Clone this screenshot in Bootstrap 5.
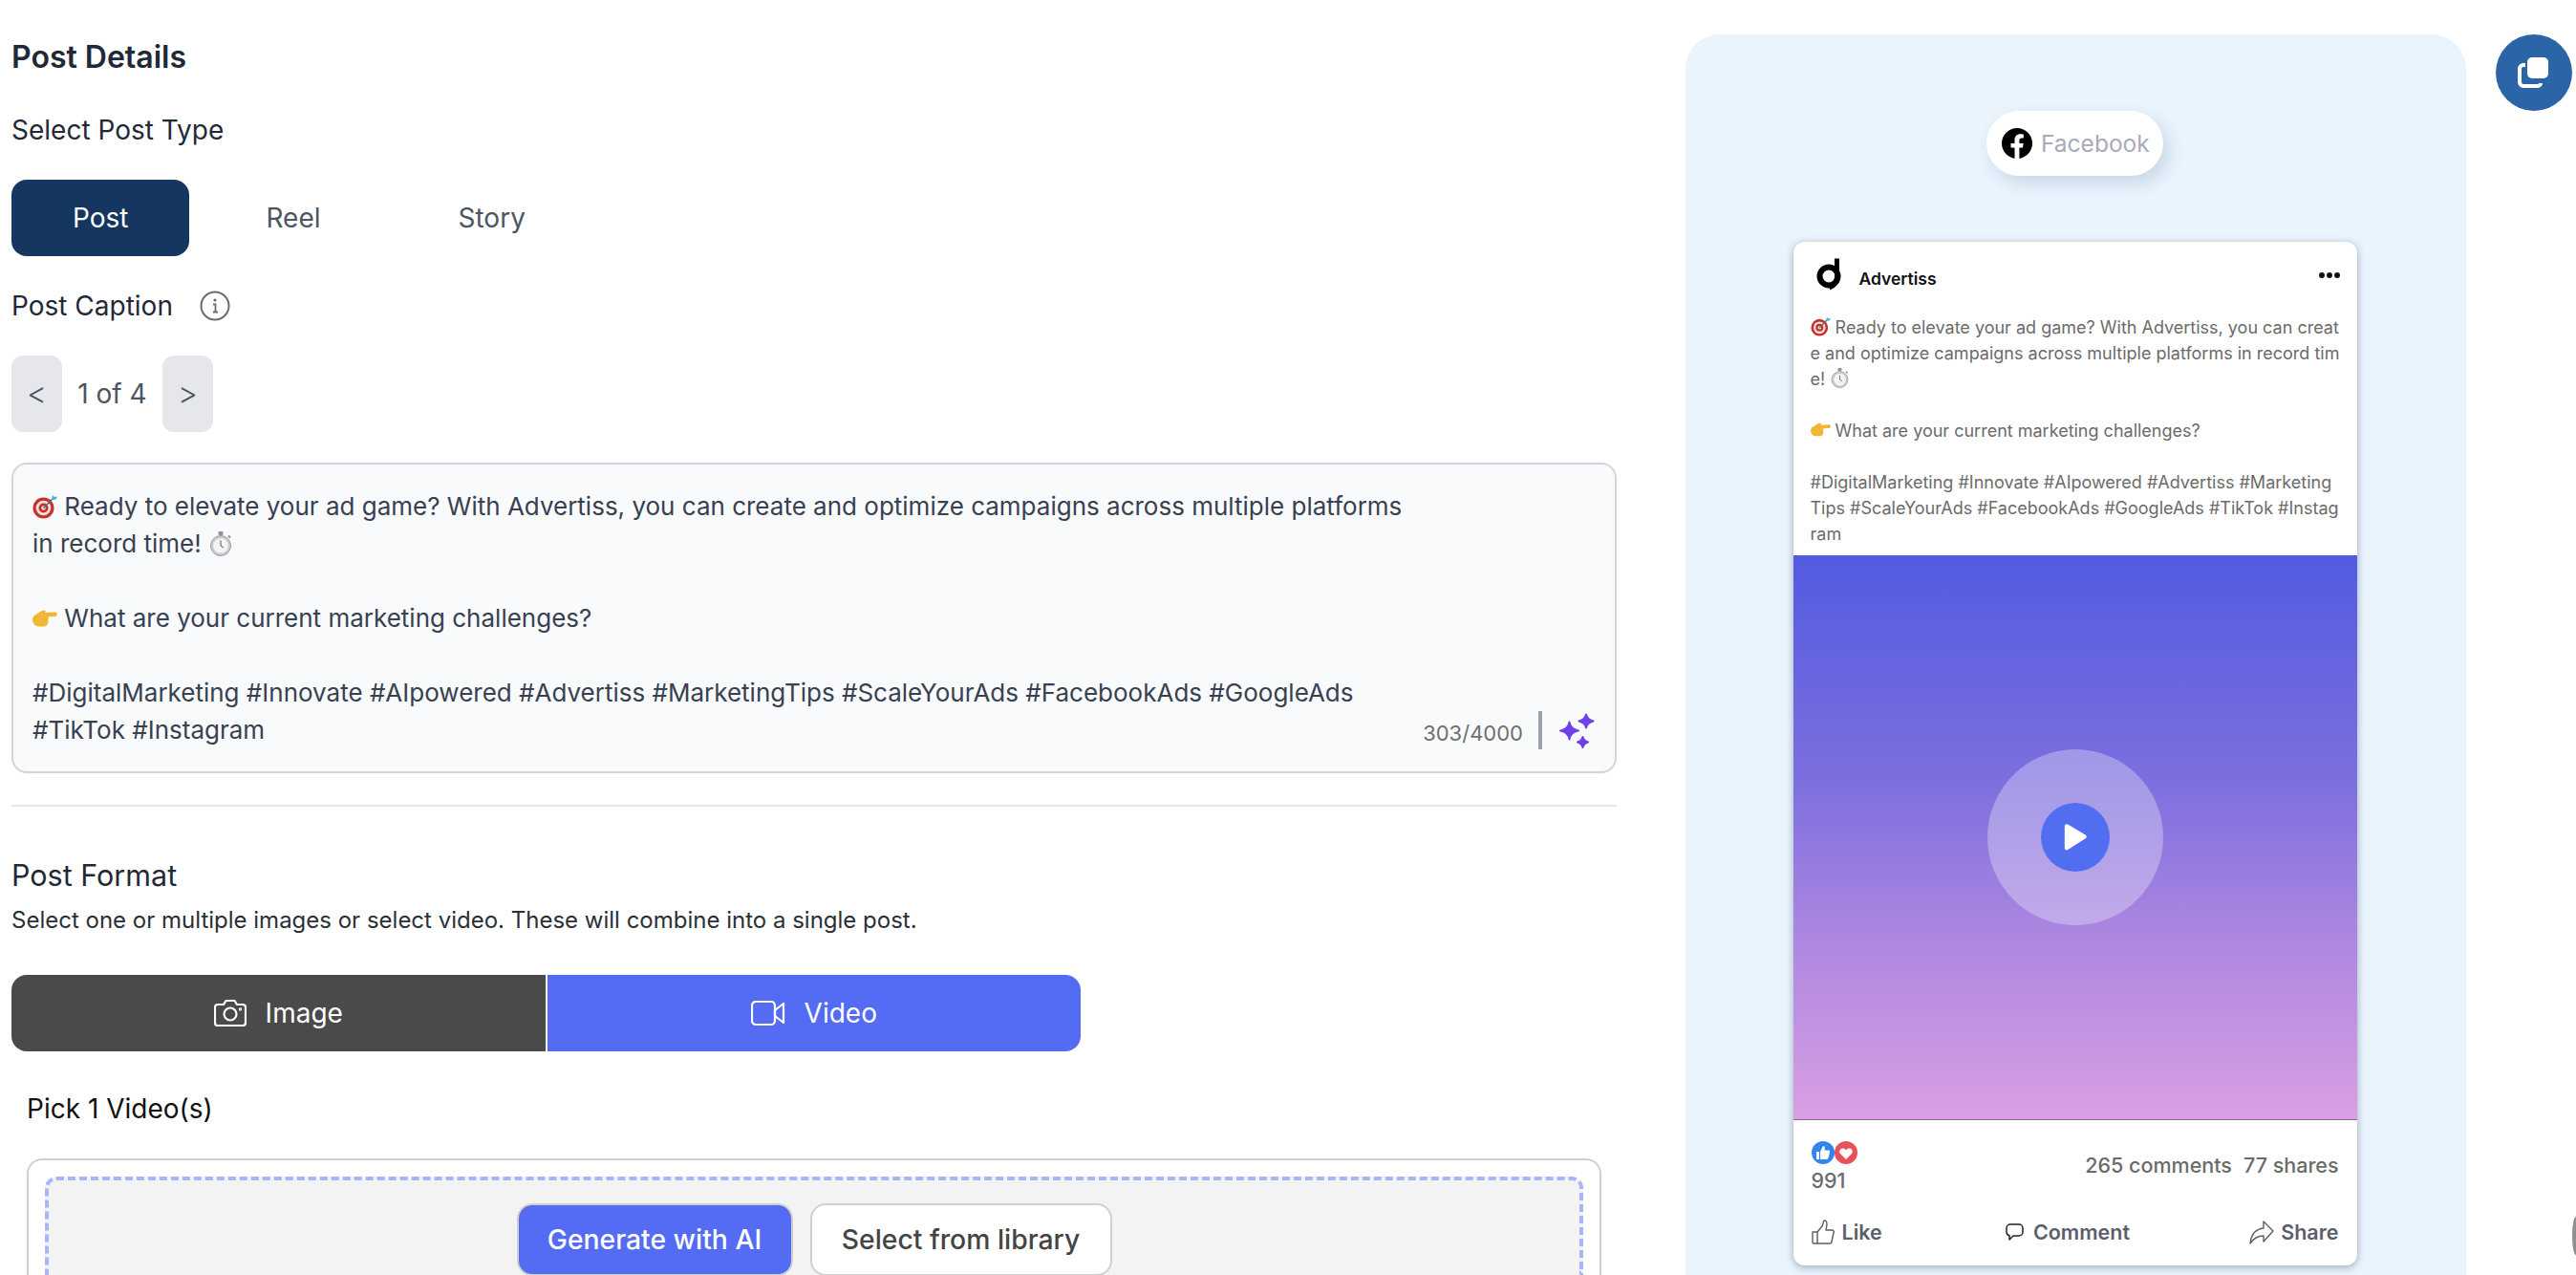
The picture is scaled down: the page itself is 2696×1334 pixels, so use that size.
<!DOCTYPE html>
<html lang="en">
<head>
  <meta charset="UTF-8">
  <title>Post Details</title>
  <link href="https://cdn.jsdelivr.net/npm/bootstrap@5.3.6/dist/css/bootstrap.min.css" rel="stylesheet">
  <style>
    html, body { height: 100%; overflow: hidden; }
    body { font-family: Inter, "Liberation Sans", sans-serif; font-size: 28px; background: #fff; color: #1f2937; }
    .page-wrap { height: 1334px; padding: 0 4px 0 12px; gap: 72px; }
    .left-col { width: 1680px; flex: none; }
    .sec-title { font-size: 32px; font-weight: 600; line-height: 40px; margin: 40px 0 0; color: #1f2937; }
    .lbl { font-size: 28px; line-height: 40px; color: #1f2937; }
    .type-tabs { margin-top: 32px; gap: 16px; }
    .type-btn { height: 80px; padding: 0 64px 0; font-size: 28px; border: 0; border-radius: 16px; background: transparent; color: #4b5563; }
    .type-btn.on { background: #14365f; color: #fff; }
    .info-ico { width: 32px; height: 32px; margin-left: 28px; }
    .pager { margin-top: 32px; height: 80px; color: #4b5563; }
    .pg-btn { width: 53px; height: 80px; padding: 0; border: 0; border-radius: 12px; background: #e5e7eb; color: #4b5563; font-size: 32px; font-weight: 300; }
    .pg-txt { width: 105px; text-align: center; }
    .caption-box { position: relative; margin-top: 32px; height: 325px; padding: 24px 200px 0 20px; background: #f9fafb; border: 2px solid #d1d5db; border-radius: 16px; font-size: 26px; line-height: 39px; color: #374151; white-space: pre-wrap; }
    .emo { display: inline-block; width: 26px; height: 26px; vertical-align: -4px; }
    .cap-tools { position: absolute; right: 21px; bottom: 23px; gap: 18px; font-size: 22px; color: #6f6f6f; }
    .cap-count { align-self: flex-end; line-height: 33px; margin-right: -2px; }
    .cap-sep { width: 4px; height: 40px; background: #9ca3af; }
    .rule { height: 2px; background: #e5e7eb; margin-top: 33px; }
    .fmt-title { font-size: 30.5px; font-weight: 400; line-height: 40px; margin: 52px 0 0; color: #1f2937; }
    .fmt-desc { font-size: 24px; line-height: 32px; margin: 11px 0 0; color: #2b2f36; }
    .fmt-toggle { margin-top: 41px; width: 1119px; gap: 2px; }
    .fmt-btn { flex: 1; height: 80px; border: 0; color: #fff; font-size: 28px; gap: 20px; }
    .fmt-btn.img-btn { background: #4a4a4a; border-radius: 16px 0 0 16px; }
    .fmt-btn.vid-btn { background: #536cf3; border-radius: 0 16px 16px 0; }
    .pick-lbl { margin: 40px 0 0 16px; color: #111; line-height: 40px; }
    .media-box { margin: 32px 0 0 16px; width: 1648px; height: 122px; padding: 17px 17px 0; border: 2px solid #d0d0d0; border-bottom: 0; border-radius: 16px 16px 0 0; }
    .drop-zone { height: 103px; padding-top: 24px; gap: 18px; background: #f3f3f3; border: 4px dashed #a8b5fb; border-bottom: 0; border-radius: 12px 12px 0 0; }
    .act-btn { height: 76px; border: 2px solid #d0d0d0; border-radius: 16px; font-size: 28.3px; font-weight: 500; padding: 0; }
    .act-btn.gen { width: 289px; background: #536cf3; color: #fff; }
    .act-btn.lib { width: 316px; background: #fff; color: #444; }
    .preview { width: 817px; height: 1298px; flex: none; margin-top: 36px; padding: 80px 2px 0 0; background: #e9f4fd; border-radius: 36px 36px 0 0; }
    .fb-pill { height: 68px; width: 185px; padding-left: 16px; gap: 9px; background: #fff; border-radius: 34px; box-shadow: 6px 8px 18px rgba(40, 70, 110, .16); color: #a9aab8; font-size: 24.5px; }
    .post-card { width: 590px; margin-top: 69px; border: 0; border-radius: 12px; overflow: hidden; box-shadow: 0 2px 8px rgba(40, 60, 90, .4); }
    .post-head { padding: 14px 18px 0 19px; height: 52px; }
    .post-name { font-size: 17.5px; font-weight: 600; color: #111; margin-left: 10px; margin-top: 12px; }
    .dots { gap: 2px; margin-top: 4px; }
    .dots i { width: 6px; height: 6px; border-radius: 50%; background: #111; display: block; }
    .post-text { margin: 24px 18px 9px 18px; font-size: 18px; line-height: 27px; height: 243px; color: #6b6b6b; white-space: pre-wrap; word-break: break-all; }
    .post-text .emo { width: 21px; height: 21px; vertical-align: -3px; }
    .post-media { height: 591px; background: linear-gradient(#525be0, #7d6fdf 40%, #a884e0 65%, #da9fe3); border-bottom: 1px solid #8a6a90; }
    .play-ring { width: 184px; height: 184px; border-radius: 50%; background: rgba(255, 255, 255, .3); }
    .play-dot { width: 72px; height: 72px; border-radius: 50%; background: #516ef0; }
    .post-foot { padding: 22px 19px 18px 19px; color: #6b6b6b; font-size: 21.5px; font-weight: 500; }
    .react { width: 24px; height: 24px; display: block; }
    .react-num { line-height: 30px; margin-top: 2px; }
    .post-stats { gap: 12px; margin-bottom: 5px; }
    .post-acts { margin-top: 22px; height: 34px; color: #5c5f6b; font-weight: 600; font-size: 21.5px; }
    .fab { width: 80px; height: 80px; flex: none; margin-top: 36px; margin-left: -41px; border: 0; border-radius: 50%; background: #2b65a8; padding: 0; }
    .edge-dot { position: absolute; left: 2692px; top: 1273px; width: 4px; height: 40px; border-radius: 4px 0 0 4px / 20px 0 0 20px; background: #8f8f8f; }
  </style>
</head>
<body>
  <svg width="0" height="0" class="position-absolute">
    <symbol id="e-target" viewBox="0 0 26 26">
      <circle cx="11.5" cy="14.5" r="11" fill="#c9302c"/>
      <circle cx="11.5" cy="14.5" r="7.8" fill="#f3e4e0"/>
      <circle cx="11.5" cy="14.5" r="5" fill="#c9302c"/>
      <circle cx="11.5" cy="14.5" r="2.200" fill="#f3e4e0"/>
      <path d="M11.5 14.5 21 5" stroke="#5a6a70" stroke-width="1.6"/>
      <path d="M20 6l1-5 2 2 3-.5-1.500 3-5 .5z" fill="#4fb3c8"/>
    </symbol>
    <symbol id="e-watch" viewBox="0 0 26 26">
      <rect x="10.500" y="0" width="5" height="4" rx="1" fill="#8f9398"/>
      <circle cx="13" cy="15" r="10.500" fill="#c9ccd0" stroke="#9a9da3" stroke-width="1"/>
      <circle cx="13" cy="15" r="7.800" fill="#f4f4f5"/>
      <path d="M13 15V9.500M13 15l3 2" stroke="#555" stroke-width="1"/>
      <path d="M21 4.500l2 2" stroke="#8f9398" stroke-width="2"/>
    </symbol>
    <symbol id="e-hand" viewBox="0 0 26 26">
      <path d="M0 14c0-3 3-5 5-6 3-2 6-4 9-3l-1 2 11-.500c2.500 0 2.500 4 0 4.500l-8 .5c1 1 1 2.500 0 3.500.8 1 .8 2.500-.2 3.500 0 2-2 3-4 3H7c-4 0-7-3-7-8z" fill="#f2b636"/>
    </symbol>
  </svg>

  <div class="page-wrap d-flex align-items-start">
    <main class="left-col">
      <h1 class="sec-title">Post Details</h1>
      <div class="lbl" style="margin-top:36px">Select Post Type</div>
      <div class="type-tabs d-flex">
        <button class="type-btn on">Post</button>
        <button class="type-btn">Reel</button>
        <button class="type-btn">Story</button>
      </div>
      <div class="lbl d-flex align-items-center" style="margin-top:32px">
        Post Caption
        <svg class="info-ico" viewBox="0 0 32 32" fill="none"><circle cx="16" cy="16" r="14.500" stroke="#6b6b6b" stroke-width="2"/><circle cx="16" cy="10" r="1.600" fill="#6b6b6b"/><path d="M14 14.500h2.500V22M14 22.500h5" stroke="#6b6b6b" stroke-width="1.800"/></svg>
      </div>
      <div class="pager d-flex align-items-center">
        <button class="pg-btn">&lt;</button>
        <span class="pg-txt">1 of 4</span>
        <button class="pg-btn">&gt;</button>
      </div>
      <div class="caption-box"><svg class="emo"><use href="#e-target"/></svg> Ready to elevate your ad game? With Advertiss, you can create and optimize campaigns across multiple platforms in record time! <svg class="emo"><use href="#e-watch"/></svg>

<svg class="emo"><use href="#e-hand"/></svg> What are your current marketing challenges?

#DigitalMarketing #Innovate #AIpowered #Advertiss #MarketingTips #ScaleYourAds #FacebookAds #GoogleAds #TikTok #Instagram<div class="cap-tools d-flex align-items-center">
          <span class="cap-count">303/4000</span>
          <span class="cap-sep"></span>
          <svg width="37" height="37" viewBox="0 0 37 37" fill="#7040e8" stroke="#7040e8" stroke-width="2" stroke-linejoin="round"><path d="M10.500 9.500Q11.500 17 20 18.500 11.500 20 10.500 27.500 9.500 20 1 18.500 9.500 17 10.500 9.500z"/><path d="M28 1.500Q29 7 35.500 8.500 29 10 28 15.500 27 10 20.500 8.500 27 7 28 1.500z"/><path d="M24.500 25Q25.500 29 30 30.500 25.500 32 24.500 36 23.500 32 19 30.500 23.500 29 24.500 25z"/></svg>
        </div></div>
      <div class="rule"></div>
      <h2 class="fmt-title">Post Format</h2>
      <p class="fmt-desc">Select one or multiple images or select video. These will combine into a single post.</p>
      <div class="fmt-toggle d-flex">
        <button class="fmt-btn img-btn d-flex align-items-center justify-content-center">
          <svg width="34" height="30" viewBox="0 0 34 30" fill="none" stroke="#fff" stroke-width="2.200" stroke-linejoin="round"><path d="M4 6h6l2.500-4h9L24 6h6a3 3 0 0 1 3 3v16a3 3 0 0 1-3 3H4a3 3 0 0 1-3-3V9a3 3 0 0 1 3-3z"/><circle cx="17" cy="16" r="6.500"/><circle cx="27.500" cy="11" r=".6"/></svg>
          Image
        </button>
        <button class="fmt-btn vid-btn d-flex align-items-center justify-content-center">
          <svg width="36" height="26" viewBox="0 0 36 26" fill="none" stroke="#fff" stroke-width="2.200" stroke-linejoin="round"><rect x="1" y="1" width="24" height="24" rx="4"/><path d="M25 10l9-7v20l-9-7z"/></svg>
          Video
        </button>
      </div>
      <div class="pick-lbl">Pick 1 Video(s)</div>
      <div class="media-box">
        <div class="drop-zone d-flex justify-content-center align-items-start">
          <button class="act-btn gen">Generate with AI</button>
          <button class="act-btn lib">Select from library</button>
        </div>
      </div>
    </main>

    <aside class="preview d-flex flex-column align-items-center">
      <div class="fb-pill d-flex align-items-center">
        <svg width="32" height="32" viewBox="0 0 32 32"><circle cx="16" cy="16" r="16" fill="#000"/><path d="M13.500 32V20.500H9.500V16h4v-3.500c0-4 2.400-6.200 6-6.200 1.700 0 3.300.3 3.300.3v3.900h-1.900c-1.900 0-2.500 1.200-2.500 2.400V16h4.300l-.7 4.500h-3.600V32z" fill="#fff"/></svg>
        Facebook
      </div>
      <article class="post-card card">
        <div class="post-head d-flex justify-content-between align-items-center">
          <div class="d-flex align-items-center">
            <svg width="40" height="40" viewBox="0 0 40 40" fill="none"><circle cx="20" cy="20" r="19.500" fill="#fff"/><circle cx="18" cy="23" r="9.500" stroke="#000" stroke-width="6"/><path d="M26.500 4.500V24c0 5 -2 9 -8 11" stroke="#000" stroke-width="5"/></svg>
            <span class="post-name">Advertiss</span>
          </div>
          <div class="dots d-flex"><i></i><i></i><i></i></div>
        </div>
        <div class="post-text"><svg class="emo"><use href="#e-target"/></svg> Ready to elevate your ad game? With Advertiss, you can create and optimize campaigns across multiple platforms in record time! <svg class="emo"><use href="#e-watch"/></svg>

<svg class="emo"><use href="#e-hand"/></svg> What are your current marketing challenges?

#DigitalMarketing #Innovate #AIpowered #Advertiss #MarketingTips #ScaleYourAds #FacebookAds #GoogleAds #TikTok #Instagram</div>
        <div class="post-media d-flex align-items-center justify-content-center">
          <div class="play-ring d-flex align-items-center justify-content-center">
            <div class="play-dot d-flex align-items-center justify-content-center">
              <svg width="28" height="32" viewBox="0 0 28 32"><path d="M4 3 25 15.500 4 29z" fill="#fff" stroke="#fff" stroke-width="5" stroke-linejoin="round" transform="translate(1.500 1.700) scale(.88)"/></svg>
            </div>
          </div>
        </div>
        <div class="post-foot">
          <div class="d-flex justify-content-between align-items-center">
            <div>
              <div class="d-flex">
                <svg class="react" viewBox="0 0 24 24"><circle cx="12" cy="12" r="12" fill="#2f86ee"/><path d="M5 11h3v8H5zM9 11l3-6c2 0 2 2 1.500 4.500H18c1 0 1.500 1 1 2l-1.500 6c-.2.8-1 1.500-2 1.500H9z" fill="#fff"/></svg>
                <svg class="react" viewBox="0 0 24 24"><circle cx="12" cy="12" r="12" fill="#e8505a"/><path d="M12 19 6 13c-3-4 3-8 6-3.500C15 5 21 9 18 13z" fill="#fff"/></svg>
              </div>
              <div class="react-num">991</div>
            </div>
            <div class="post-stats d-flex"><span>265 comments</span><span>77 shares</span></div>
          </div>
          <div class="post-acts d-flex justify-content-between align-items-center">
            <span class="d-flex align-items-center gap-2">
              <svg width="24" height="26" viewBox="0 0 24 26" fill="none" stroke="#5c5f6b" stroke-width="1.400" stroke-linejoin="round"><path d="M1 13h5v12H2a1 1 0 0 1-1-1z"/><path d="M6 13l5-6c1-2 1-5 2-6 2 0 3 2 3 4l-1 6h6c2 0 3 2 2 3l-2 9c0 1-1 2-2 2H6"/></svg>
              Like
            </span>
            <span class="d-flex align-items-center" style="gap:10px;margin-left:4px">
              <svg width="19" height="18" viewBox="0 0 19 18" fill="none" stroke="#222" stroke-width="1.500" stroke-linejoin="round"><path d="M5 1h9a4 4 0 0 1 4 4v4a4 4 0 0 1-4 4H8l-4 4v-4.200A4 4 0 0 1 1 9V5a4 4 0 0 1 4-4z"/></svg>
              Comment
            </span>
            <span class="d-flex align-items-center" style="gap:7px">
              <svg width="26" height="26" viewBox="0 0 26 26" fill="none" stroke="#5c5f6b" stroke-width="1.400" stroke-linejoin="round"><path d="M15 2l10 10-10 11v-6C9 17 5 19 1 25c1-10 6-15 14-16z"/></svg>
              Share
            </span>
          </div>
        </div>
      </article>
    </aside>

    <button class="fab d-flex align-items-center justify-content-center">
      <svg width="34" height="34" viewBox="0 0 34 34" fill="none"><rect x="10" y="1" width="22" height="22" rx="5" fill="#fff"/><path d="M2 11.500V27a4 4 0 0 0 4 4h15a3 3 0 0 0 3-3" stroke="#fff" stroke-width="4"/><path d="M2 13a4 4 0 0 1 4-4h2" stroke="#fff" stroke-width="4"/></svg>
    </button>
  </div>
  <div class="edge-dot"></div>
  <script src="https://cdn.jsdelivr.net/npm/bootstrap@5.3.6/dist/js/bootstrap.bundle.min.js"></script>
</body>
</html>
